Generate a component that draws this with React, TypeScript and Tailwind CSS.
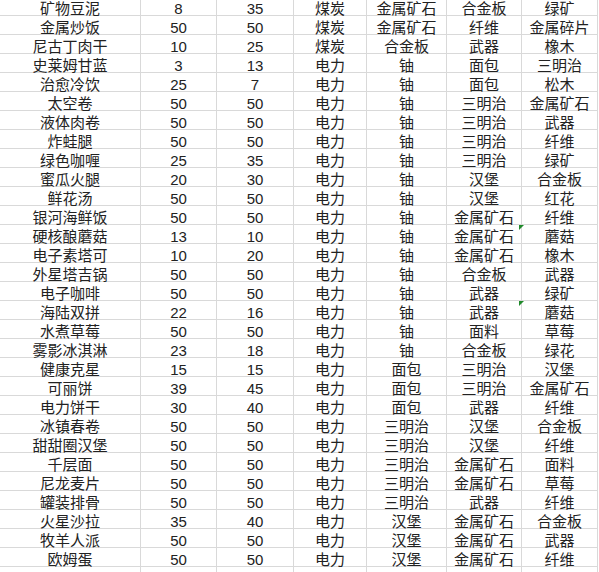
import React from "react";

type Row = [string, string, string, string, string, string, string, boolean?];

const rows: Row[] = [
  ["矿物豆泥", "8", "35", "煤炭", "金属矿石", "合金板", "绿矿"],
  ["金属炒饭", "50", "50", "煤炭", "金属矿石", "纤维", "金属碎片"],
  ["尼古丁肉干", "10", "25", "煤炭", "合金板", "武器", "橡木"],
  ["史莱姆甘蓝", "3", "13", "电力", "铀", "面包", "三明治"],
  ["治愈冷饮", "25", "7", "电力", "铀", "面包", "松木"],
  ["太空卷", "50", "50", "电力", "铀", "三明治", "金属矿石"],
  ["液体肉卷", "50", "50", "电力", "铀", "三明治", "武器"],
  ["炸蛙腿", "50", "50", "电力", "铀", "三明治", "纤维"],
  ["绿色咖喱", "25", "35", "电力", "铀", "三明治", "绿矿"],
  ["蜜瓜火腿", "20", "30", "电力", "铀", "汉堡", "合金板"],
  ["鲜花汤", "50", "50", "电力", "铀", "汉堡", "红花"],
  ["银河海鲜饭", "50", "50", "电力", "铀", "金属矿石", "纤维"],
  ["硬核酿蘑菇", "13", "10", "电力", "铀", "金属矿石", "蘑菇", true],
  ["电子素塔可", "10", "20", "电力", "铀", "金属矿石", "橡木"],
  ["外星塔吉锅", "50", "50", "电力", "铀", "合金板", "武器"],
  ["电子咖啡", "50", "50", "电力", "铀", "武器", "绿矿"],
  ["海陆双拼", "22", "16", "电力", "铀", "武器", "蘑菇", true],
  ["水煮草莓", "50", "50", "电力", "铀", "面料", "草莓"],
  ["雾影冰淇淋", "23", "18", "电力", "铀", "合金板", "绿花"],
  ["健康克星", "15", "15", "电力", "面包", "三明治", "汉堡"],
  ["可丽饼", "39", "45", "电力", "面包", "三明治", "金属矿石"],
  ["电力饼干", "30", "40", "电力", "面包", "武器", "纤维"],
  ["冰镇春卷", "50", "50", "电力", "三明治", "汉堡", "合金板"],
  ["甜甜圈汉堡", "50", "50", "电力", "三明治", "汉堡", "纤维"],
  ["千层面", "50", "50", "电力", "三明治", "金属矿石", "面料"],
  ["尼龙麦片", "50", "50", "电力", "三明治", "金属矿石", "草莓"],
  ["罐装排骨", "50", "50", "电力", "三明治", "武器", "纤维"],
  ["火星沙拉", "35", "40", "电力", "汉堡", "金属矿石", "合金板"],
  ["牧羊人派", "50", "50", "电力", "汉堡", "金属矿石", "武器"],
  ["欧姆蛋", "50", "50", "电力", "汉堡", "金属矿石", "纤维"],
];

const cell =
  "relative h-[19px] border-r border-b border-[#d9d9d9] text-center pt-[5px] leading-[14px] whitespace-nowrap";

export default function App() {
  return (
    <div
      className="w-[599px] h-[572px] overflow-hidden bg-white text-[15px] text-[#222222]"
      style={{ fontFamily: '"Liberation Sans", "Noto Sans CJK SC", sans-serif' }}
    >
      <div className="-mt-[3px] flex flex-col">
        {rows.map((r, i) => (
          <div
            key={i}
            className="grid grid-cols-[141px_76px_77px_73px_80px_75px_76px]"
          >
            <div className={cell}>{r[0]}</div>
            <div className={cell}>{r[1]}</div>
            <div className={cell}>{r[2]}</div>
            <div className={cell}>{r[3]}</div>
            <div className={cell}>{r[4]}</div>
            <div className={cell}>{r[5]}</div>
            <div className={cell}>
              {r[7] && (
                <span className="absolute -left-[3px] top-0 h-0 w-0 border-t-[5px] border-r-[5px] border-t-[#1f8a2a] border-r-transparent" />
              )}
              {r[6]}
            </div>
          </div>
        ))}
        <div className="grid grid-cols-[141px_76px_77px_73px_80px_75px_76px]">
          {[0, 1, 2, 3, 4, 5, 6].map((k) => (
            <div key={k} className="h-[19px] border-r border-[#d9d9d9]" />
          ))}
        </div>
      </div>
    </div>
  );
}
